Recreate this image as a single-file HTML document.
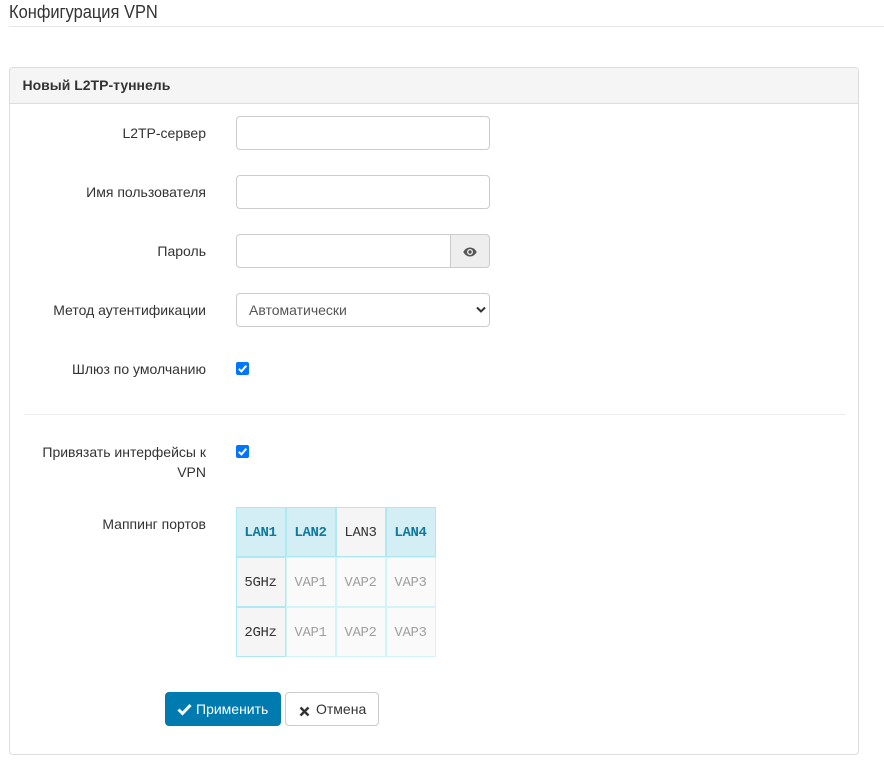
<!DOCTYPE html>
<html><head><meta charset="utf-8"><style>
html,body{margin:0;padding:0;background:#fff}
body{width:884px;height:776px;position:relative;overflow:hidden;font-family:"Liberation Sans",sans-serif;font-size:14px;color:#333}
.a{position:absolute;box-sizing:border-box}
.lbl{position:absolute;right:678px;text-align:right;line-height:20px;white-space:nowrap}
.inp{position:absolute;left:236px;width:254px;height:34px;box-sizing:border-box;border:1px solid #ccc;border-radius:4px;background:#fff}
.cb{position:absolute;left:236px;width:13px;height:13px;background:#0075ff;border-radius:2px}
.c{position:absolute;width:50px;height:50px;box-sizing:border-box;text-align:center;line-height:50px;font-family:"Liberation Mono",monospace;font-size:14px;letter-spacing:-.35px;padding-right:1px;border:1px solid}
.on{background:#d3eef5;border-color:#aee8f0;color:#0f7a9c;font-weight:bold}
.off{background:#f5f5f5;border-color:#aee8f0;color:#333}
.v{background:#fafafa;border-color:#d2f3f7;color:#a0a0a0}
</style></head><body>
<div class="a" style="left:9px;top:0;font-size:18px;line-height:24px;color:#333;white-space:nowrap;transform:scaleX(.914);transform-origin:0 0">Конфигурация VPN</div>
<div class="a" style="left:9px;top:26px;width:875px;height:1px;background:#e6e6e6"></div>

<div class="a" style="left:9px;top:67px;width:850px;height:688px;border:1px solid #ddd;border-radius:4px"></div>
<div class="a" style="left:10px;top:68px;width:848px;height:36px;background:#f5f5f5;border-bottom:1px solid #ddd;border-radius:3px 3px 0 0;padding:7px 12.500px;font-weight:bold;line-height:20px">Новый L2TP-туннель</div>

<div class="lbl" style="top:123px">L2TP-сервер</div>
<div class="inp" style="top:116px"></div>
<div class="lbl" style="top:182px">Имя пользователя</div>
<div class="inp" style="top:175px"></div>
<div class="lbl" style="top:241px">Пароль</div>
<div class="inp" style="top:234px;width:215px;border-radius:4px 0 0 4px"></div>
<div class="a" style="left:450px;top:234px;width:40px;height:34px;background:#eee;border:1px solid #ccc;border-radius:0 4px 4px 0"></div>
<svg class="a" style="left:463px;top:247px" width="14" height="10" viewBox="0 0 14 10"><path fill="#555" fill-rule="evenodd" d="M7 .5C4 .5 1.600 2.400.3 5 1.600 7.600 4 9.500 7 9.500S12.400 7.600 13.700 5C12.400 2.400 10 .5 7 .5zM7 2a3 3 0 1 1 0 6 3 3 0 0 1 0-6z"/><circle cx="7" cy="5" r="1.700" fill="#555"/></svg>

<div class="lbl" style="top:300px">Метод аутентификации</div>
<div class="inp" style="top:293px;padding:0 12px;line-height:32px;color:#555">Автоматически</div>
<svg class="a" style="left:476px;top:306px" width="10" height="8" viewBox="0 0 10 8"><path d="M1 1.500l4 4 4-4" fill="none" stroke="#333" stroke-width="2"/></svg>

<div class="lbl" style="top:359px">Шлюз по умолчанию</div>
<div class="cb" style="top:362px"><svg width="13" height="13" viewBox="0 0 13 13" style="display:block"><path d="M2.800 6.800l2.600 2.600 4.900-5.700" fill="none" stroke="#fff" stroke-width="2"/></svg></div>

<div class="a" style="left:24px;top:414px;width:822px;height:1px;background:#eee"></div>

<div class="lbl" style="top:442px">Привязать интерфейсы к</div>
<div class="lbl" style="top:462px">VPN</div>
<div class="cb" style="top:445px"><svg width="13" height="13" viewBox="0 0 13 13" style="display:block"><path d="M2.800 6.800l2.600 2.600 4.900-5.700" fill="none" stroke="#fff" stroke-width="2"/></svg></div>

<div class="lbl" style="top:514px">Маппинг портов</div>

<div class="c on" style="left:236px;top:507px">LAN1</div>
<div class="c on" style="left:286px;top:507px">LAN2</div>
<div class="c off" style="left:336px;top:507px">LAN3</div>
<div class="c on" style="left:386px;top:507px">LAN4</div>
<div class="c off" style="left:236px;top:557px">5GHz</div>
<div class="c v" style="left:286px;top:557px">VAP1</div>
<div class="c v" style="left:336px;top:557px">VAP2</div>
<div class="c v" style="left:386px;top:557px">VAP3</div>
<div class="c off" style="left:236px;top:607px">2GHz</div>
<div class="c v" style="left:286px;top:607px">VAP1</div>
<div class="c v" style="left:336px;top:607px">VAP2</div>
<div class="c v" style="left:386px;top:607px">VAP3</div>

<div class="a" style="left:165px;top:692px;width:116px;height:34px;background:#007bb0;border-radius:4px;color:#fff;line-height:34px;padding-left:31px">Применить</div>
<svg class="a" style="left:177px;top:703px" width="15" height="13" viewBox="0 0 15 13"><path d="M1.500 6.500l4 4 8-8.500" fill="none" stroke="#fff" stroke-width="3"/></svg>
<div class="a" style="left:285px;top:692px;width:94px;height:34px;background:#fff;border:1px solid #ccc;border-radius:4px;color:#333;line-height:32px;padding-left:30px">Отмена</div>
<svg class="a" style="left:299px;top:706px" width="11" height="11" viewBox="0 0 11 11"><path d="M1.500 1.500l8 8M9.500 1.500l-8 8" fill="none" stroke="#333" stroke-width="2.400"/></svg>
</body></html>
